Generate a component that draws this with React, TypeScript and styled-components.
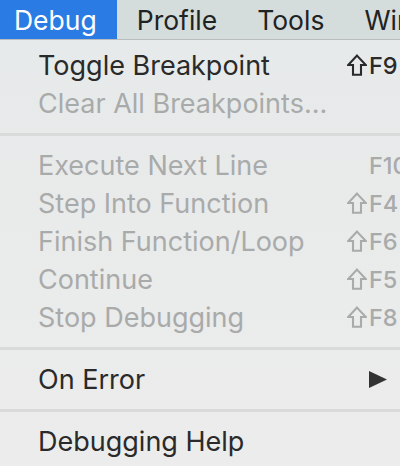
import React from 'react';
import styled, { createGlobalStyle } from 'styled-components';

const Global = createGlobalStyle`
  html, body {
    margin: 0;
    padding: 0;
    background: #eaebeb;
    overflow: hidden;
  }
  body {
    font-family: Inter, "Noto Sans", "Liberation Sans", sans-serif;
    -webkit-font-smoothing: antialiased;
  }
`;

const Screen = styled.div`
  width: 400px;
  height: 466px;
  overflow: hidden;
  display: flex;
  flex-direction: column;
`;

const MenuBar = styled.nav`
  display: flex;
  height: 39px;
  background: #d4dcdc;
  border-bottom: 1px solid #b9bdbd;
  white-space: nowrap;
  flex-shrink: 0;
`;

const BarItem = styled.div<{ active?: boolean; first?: boolean }>`
  display: flex;
  align-items: center;
  padding: 0 20px 0 ${p => (p.first ? '14px' : '20px')};
  font-size: 26.5px;
  color: ${p => (p.active ? '#ffffff' : '#1f2323')};
  background: ${p => (p.active ? '#2a7ce4' : 'transparent')};
`;

const Menu = styled.ul`
  list-style: none;
  margin: 0;
  padding: 6px 0 0;
  width: 430px;
  background: linear-gradient(#e7eaea, #ececec);
  flex-grow: 1;
`;

const Row = styled.li<{ disabled?: boolean }>`
  display: flex;
  align-items: center;
  height: 38px;
  padding-left: 38px;
  font-size: 27px;
  color: ${p => (p.disabled ? '#a9aaaa' : '#2a2a2a')};
  white-space: nowrap;
`;

const Label = styled.span`
  flex-grow: 1;
`;

const Shortcut = styled.span`
  display: flex;
  align-items: center;
  flex-shrink: 0;
  width: 83px;
  font-size: 23.5px;
  font-weight: 500;
`;

const Modifier = styled.span`
  display: flex;
  flex-shrink: 0;
  justify-content: flex-end;
  align-items: center;
  width: 20px;
  height: 22px;
  margin-right: 2px;
`;

const Separator = styled.li`
  height: 24px;
  display: flex;
  align-items: center;

  &::after {
    content: '';
    display: block;
    width: 100%;
    height: 3px;
    margin-top: 1px;
    background: #d9dbdb;
  }
`;

const Glyph = styled.svg`
  display: block;
  flex-shrink: 0;
`;

const ShiftIcon = ({ color }: { color: string }) => (
  <Glyph width="20" height="22" viewBox="0 0 20 22">
    <path
      d="M10 1.6 L18.8 11 L14 11 L14 20.8 L6 20.8 L6 11 L1.2 11 Z"
      fill="none"
      stroke={color}
      strokeWidth="2.1"
      strokeLinejoin="miter"
    />
  </Glyph>
);

const Arrow = () => (
  <Glyph width="18" height="17" viewBox="0 0 18 17">
    <path d="M0 0 L18 8.5 L0 17 Z" fill="#333333" />
  </Glyph>
);

type Item =
  | { kind: 'sep' }
  | { kind: 'item'; label: string; disabled?: boolean; shift?: boolean; key?: string; submenu?: boolean };

const items: Item[] = [
  { kind: 'item', label: 'Toggle Breakpoint', shift: true, key: 'F9' },
  { kind: 'item', label: 'Clear All Breakpoints...', disabled: true },
  { kind: 'sep' },
  { kind: 'item', label: 'Execute Next Line', disabled: true, key: 'F10' },
  { kind: 'item', label: 'Step Into Function', disabled: true, shift: true, key: 'F4' },
  { kind: 'item', label: 'Finish Function/Loop', disabled: true, shift: true, key: 'F6' },
  { kind: 'item', label: 'Continue', disabled: true, shift: true, key: 'F5' },
  { kind: 'item', label: 'Stop Debugging', disabled: true, shift: true, key: 'F8' },
  { kind: 'sep' },
  { kind: 'item', label: 'On Error', submenu: true },
  { kind: 'sep' },
  { kind: 'item', label: 'Debugging Help' },
];

const App = (): React.ReactElement => (
  <>
    <Global />
    <Screen>
      <MenuBar>
        <BarItem active first>Debug</BarItem>
        <BarItem>Profile</BarItem>
        <BarItem>Tools</BarItem>
        <BarItem>Window</BarItem>
      </MenuBar>
      <Menu>
        {items.map((it, i) =>
          it.kind === 'sep' ? (
            <Separator key={i} />
          ) : (
            <Row key={i} disabled={it.disabled}>
              <Label>{it.label}</Label>
              <Shortcut>
                <Modifier>
                  {it.shift && <ShiftIcon color={it.disabled ? '#a9aaaa' : '#2a2a2a'} />}
                </Modifier>
                {it.submenu ? <Arrow /> : it.key}
              </Shortcut>
            </Row>
          )
        )}
      </Menu>
    </Screen>
  </>
);

export default App;
